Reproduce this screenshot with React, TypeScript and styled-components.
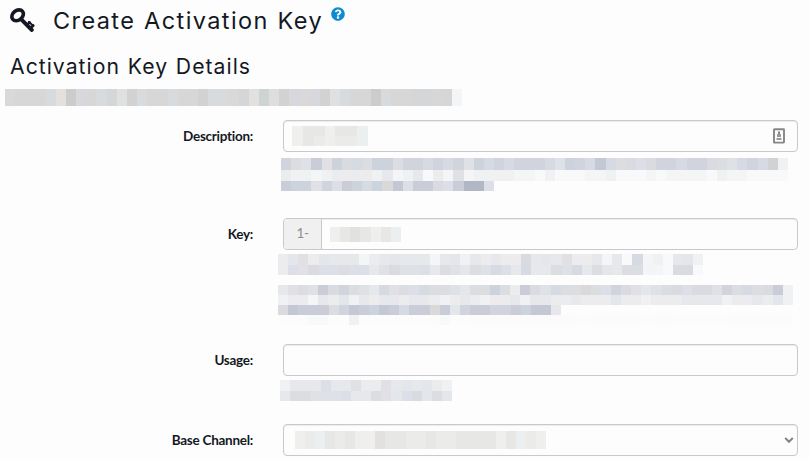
import React from "react";
import styled, { createGlobalStyle } from "styled-components";
import { FaQuestionCircle } from "react-icons/fa";

const GlobalStyle = createGlobalStyle`
  * { box-sizing: border-box; }
  body { margin: 0; background: #fdfdfd; overflow: hidden; }
`;

const Page = styled.main`
  width: 810px;
  height: 459px;
  overflow: hidden;
  background: #fdfdfd;
  color: #141823;
  font-family: Lato, "Liberation Sans", sans-serif;
`;

const TitleBar = styled.header`
  display: flex;
  align-items: flex-start;
  height: 45px;
  padding-left: 9px;
`;

const KeyIcon = styled.svg`
  width: 28px;
  height: 28px;
  margin: 6px 16px 0 0;
  flex: none;
`;

const Title = styled.h1`
  width: 278px;
  margin: 5px 0 0;
  font: 400 23.5px/32px Inter, sans-serif;
  letter-spacing: 1.4px;
  word-spacing: 0.8px;
  white-space: nowrap;
`;

const HelpIcon = styled(FaQuestionCircle)`
  width: 14px;
  height: 14px;
  margin-top: 7px;
  color: #0a8bd2;
`;

const SectionTitle = styled.h2`
  height: 44px;
  margin: 0;
  padding: 6px 0 0 10px;
  font: 400 21.2px/30px Inter, sans-serif;
  letter-spacing: 1.02px;
  word-spacing: 0.8px;
  white-space: nowrap;
`;

const Intro = styled.div`
  height: 31px;
  padding-left: 5px;
`;

const FormRow = styled.div<{ $height: number }>`
  display: grid;
  grid-template-columns: 253px 515px;
  column-gap: 30px;
  align-items: start;
  height: ${(p) => p.$height}px;
`;

const Label = styled.label`
  font-size: 13.5px;
  font-weight: 700;
  line-height: 32px;
  letter-spacing: -0.27px;
  text-align: right;
  white-space: nowrap;
`;

const Control = styled.div<{ $pad?: number }>`
  display: flex;
  align-items: center;
  height: 32px;
  padding-left: ${(p) => p.$pad ?? 0}px;
  border: 1px solid #c9c9cb;
  border-radius: 4px;
  box-shadow: inset 0 1px 1px rgba(0, 0, 0, 0.07);
  overflow: hidden;
`;

const Prefix = styled.span`
  width: 38px;
  height: 30px;
  margin-right: 8px;
  border-right: 1px solid #c9c9cb;
  background: #f0f0f0;
  color: #8d8d8d;
  font-size: 13.5px;
  line-height: 28px;
  letter-spacing: -0.3px;
  text-align: center;
`;

const EndIcon = styled.svg<{ $size: number; $gap: number }>`
  width: ${(p) => p.$size}px;
  height: 16px;
  margin-left: auto;
  margin-right: ${(p) => p.$gap}px;
`;

const Hint = styled.div<{ $left: number; $top: number }>`
  margin: ${(p) => p.$top}px 0 0 ${(p) => p.$left}px;
`;

const Strip = styled.div<{ $width: number; $height: number; $gap?: number }>`
  display: flex;
  width: ${(p) => p.$width}px;
  height: ${(p) => p.$height}px;
  margin-top: ${(p) => p.$gap ?? 0}px;
`;

const Cell = styled.span<{ $color: string }>`
  flex: 1 1 0;
  background: ${(p) => p.$color};
`;

const tones: Record<string, string> = {
  a: "#b1b7c5", b: "#c4c8d4", c: "#cacdd8", d: "#cdd3dd", e: "#d1d4dc",
  f: "#d6dae2", g: "#d9dbe1", h: "#dcdde0", i: "#dee2e6", j: "#dcdfe7",
  k: "#e1e1e5", l: "#e3e6eb", m: "#e7e8ec", n: "#ececee", o: "#f0f1f3",
  p: "#f4f5f7", q: "#f8f9fa", r: "#fbfbfb", s: "#fcfcfc",
  A: "#cccccd", B: "#d2d2d3", C: "#d7d7d8", D: "#dedede", E: "#e2e1e0",
  F: "#e7e7e6", G: "#ebebea", H: "#efefee", I: "#d4d6d8", J: "#d8dbdd",
  K: "#dfe1e0", L: "#ced3d3", M: "#dbd8da", N: "#d7d8dd", O: "#ecefef",
};

interface MosaicProps {
  pattern: string;
  width: number;
  height: number;
  gap?: number;
}

function Mosaic({ pattern, width, height, gap }: MosaicProps) {
  return (
    <Strip $width={width} $height={height} $gap={gap} aria-hidden="true">
      {pattern.split("").map((tone, i) => (
        <Cell key={i} $color={tones[tone]} />
      ))}
    </Strip>
  );
}

export default function App() {
  return (
    <Page>
      <GlobalStyle />
      <TitleBar>
        <KeyIcon viewBox="0 0 28 28" fill="none" stroke="#141823">
          <ellipse cx="8.6" cy="9.3" rx="6.3" ry="4.8" strokeWidth="3.6" transform="rotate(-38 8.6 9.3)" />
          <path d="M12 13.2 L22.9 24" strokeWidth="3.9" strokeLinecap="round" />
          <path d="M17.6 19.2 L20.6 16.4 M21 22.6 L24.2 19.5" strokeWidth="2.6" strokeLinecap="round" />
          <path d="M20 15.9 L24.3 20" strokeWidth="2" strokeLinecap="round" />
        </KeyIcon>
        <Title>Create Activation Key</Title>
        <HelpIcon />
      </TitleBar>
      <SectionTitle>Activation Key Details</SectionTitle>
      <Intro>
        <Mosaic pattern="MCCCJEANCJIKBJCCJCCBJJMIELDBNMNBKJCCAJCCIICIp" width={457} height={17} />
      </Intro>

      <FormRow $height={98}>
        <Label>Description:</Label>
        <div>
          <Control $pad={8}>
            <div>
              <Mosaic pattern="HFFHFFO" width={76} height={10} />
              <Mosaic pattern="HFGHGGO" width={76} height={10} />
            </div>
            <EndIcon $size={12} $gap={12} viewBox="0 0 12 16" fill="none">
              <rect x="1" y="1.2" width="10" height="13.4" rx="0.5" stroke="#858585" strokeWidth="1.9" />
              <rect x="5" y="3.5" width="2" height="3" fill="#858585" />
              <path d="M4 6h4v3H4zM3.5 10h5v2h-5z" fill="#999" />
            </EndIcon>
          </Control>
          <Hint $left={-2} $top={6}>
            <Mosaic pattern="ehickdgfhddheefefeidfefeeefidefbfhgjgeefeeghifefBo" width={507} height={12} />
            <Mosaic pattern="nooponnnnompomqnpkpooooppqoqqqppoqqqpqppppqoppqqqq" width={507} height={11} />
            <Mosaic pattern="cddkejcdfdMbjccgjcaaj" width={213} height={10} />
          </Hint>
        </div>
      </FormRow>

      <FormRow $height={126}>
        <Label>Key:</Label>
        <div>
          <Control>
            <Prefix>1-</Prefix>
            <Mosaic pattern="HFEFHFO" width={71} height={15} />
          </Control>
          <Hint $left={-5} $top={4}>
            <Mosaic pattern="nlknlmmmpnmlmmmpmlomnmnngmlmknnmpmqfpoqmlo" width={425} height={11} />
            <Mosaic pattern="njkgjjhjjmkgiijmhklhifjmfmmhifmhlmhhppqggq" width={425} height={10} />
            <Mosaic gap={10} pattern="mkhicgehimfkhjfhhilhhdhncgifhhMhjegklihgjggkehfhgco" width={515} height={10} />
            <Mosaic pattern="onnpmnlomnmmnmmnonmnonnmommnnmnnnlnnonnnmmmmonnmnlo" width={515} height={10} />
            <Mosaic pattern="gbccchebcdbcfccMclecceecdbbm" width={283} height={10} />
            <Mosaic pattern="sssqqssosssssssrqssrrrrrrrrrrrsrrrrrsrrsssssrrrrrrr" width={515} height={10} />
          </Hint>
        </div>
      </FormRow>

      <FormRow $height={80}>
        <Label>Usage:</Label>
        <div>
          <Control />
          <Hint $left={-3} $top={4}>
            <Mosaic pattern="ommmjmmknnkmlmlno" width={172} height={11} />
            <Mosaic pattern="mhhkiijmmhkljglhl" width={172} height={10} />
          </Hint>
        </div>
      </FormRow>

      <FormRow $height={35}>
        <Label>Base Channel:</Label>
        <Control $pad={11}>
          <Mosaic pattern="HGOFGFHHEFFGGFGGFFFFHFOGH" width={251} height={18} />
          <EndIcon $size={10} $gap={3} viewBox="0 0 10 16" fill="none">
            <path d="M1.2 6 L5 9.8 L8.8 6" stroke="#858585" strokeWidth="2" />
          </EndIcon>
        </Control>
      </FormRow>
    </Page>
  );
}
